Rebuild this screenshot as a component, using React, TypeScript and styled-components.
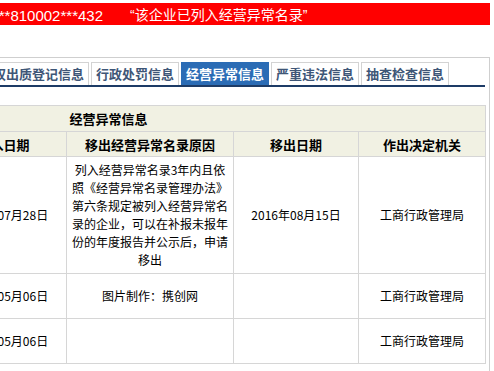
import React from 'react';
import styled, { createGlobalStyle } from 'styled-components';

const GlobalStyle = createGlobalStyle`
  html, body {
    margin: 0;
    padding: 0;
    background: #fff;
    overflow: hidden;
  }
  body {
    font-family: "Noto Sans CJK SC", "Liberation Sans", sans-serif;
    font-size: 12px;
    color: #000;
  }
`;

// the screenshot is a crop of a wider page, so the sheet is shifted left
const Viewport = styled.div`
  width: 494px;
  height: 371px;
  overflow: hidden;
`;

const Sheet = styled.div`
  margin-left: -274px;
  width: 764px;
  padding-top: 3px;
`;

const Alert = styled.div`
  height: 22px;
  background: #ff0000;
  color: #fff;
  display: flex;
  align-items: center;
  white-space: nowrap;
`;

const RegNo = styled.span`
  width: 377px;
  text-align: right;
  font-size: 15px;
  font-family: "Liberation Sans", "Noto Sans CJK SC", sans-serif;
`;

const Warning = styled.span`
  margin-left: 27px;
  font-size: 14px;
  font-family: "Liberation Sans", "Noto Sans CJK SC", sans-serif;
`;

const Panel = styled.div`
  margin-top: 32px;
  width: 764px;
  box-sizing: border-box;
  border: 1px solid #cfcfcf;
  padding: 4px 4px 24px;
`;

const TabBar = styled.div`
  display: flex;
  gap: 2px;
  border-bottom: 2px solid #1d3b66;
`;

const Tab = styled.div<{ $active?: boolean }>`
  height: 22px;
  padding: 0 4px;
  border: 1px solid ${({ $active }) => ($active ? '#2b6cb5' : '#d3d3d3')};
  border-bottom: none;
  background: ${({ $active }) => ($active ? '#2b6cb5' : '#fff')};
  color: ${({ $active }) => ($active ? '#fff' : '#3e5677')};
  font-size: 13px;
  font-weight: bold;
  line-height: 22px;
  white-space: nowrap;
`;

const Table = styled.table`
  margin-top: 18px;
  width: 100%;
  border-collapse: collapse;
  table-layout: fixed;
`;

const Row = styled.tr<{ $h: number }>`
  height: ${({ $h }) => $h}px;
`;

const Head = styled.th`
  background: #f1f1e3;
  border: 1px solid #d6d6d6;
  font-size: 13px;
  font-weight: bold;
  text-align: center;
  padding: 0 4px;
  white-space: nowrap;
`;

const Cell = styled.td`
  border: 1px solid #d6d6d6;
  padding: 4px 5px;
  line-height: 18px;
  text-align: center;
  vertical-align: middle;
  white-space: nowrap;
`;

const tabs = ['登记信息', '备案信息', '动产抵押登记信息', '股权出质登记信息', '行政处罚信息', '经营异常信息', '严重违法信息', '抽查检查信息'];

const colWidths = [41, 168, 126, 167, 125, 127];

const columns = ['序号', '列入经营异常名录原因', '列入日期', '移出经营异常名录原因', '移出日期', '作出决定机关'];

type Entry = {
  reason: React.ReactNode;
  listed: string;
  removeReason: React.ReactNode;
  removed: string;
  authority: string;
  h: number;
};

const entries: Entry[] = [
  {
    reason: <>未依照规定的期限<br />公示年度报告</>,
    listed: '2015年07月28日',
    removeReason: (
      <>
        列入经营异常名录3年内且依<br />
        照《经营异常名录管理办法》<br />
        第六条规定被列入经营异常名<br />
        录的企业，可以在补报未报年<br />
        份的年度报告并公示后，申请<br />
        移出
      </>
    ),
    removed: '2016年08月15日',
    authority: '工商行政管理局',
    h: 116,
  },
  {
    reason: <>未依照规定的期限<br />公示年度报告</>,
    listed: '2016年05月06日',
    removeReason: '图片制作：携创网',
    removed: '',
    authority: '工商行政管理局',
    h: 45,
  },
  {
    reason: <>未依照规定的期限<br />公示年度报告</>,
    listed: '2016年05月06日',
    removeReason: '',
    removed: '',
    authority: '工商行政管理局',
    h: 45,
  },
];

export default function App() {
  return (
    <>
      <GlobalStyle />
      <Viewport>
        <Sheet>
          <Alert>
            <RegNo>注册号：91***810002***432</RegNo>
            <Warning>“该企业已列入经营异常名录”</Warning>
          </Alert>
          <Panel>
            <TabBar>
              {tabs.map((t) => (
                <Tab key={t} $active={t === '经营异常信息'}>
                  {t}
                </Tab>
              ))}
            </TabBar>
            <Table>
              <colgroup>
                {colWidths.map((w, i) => (
                  <col key={i} style={{ width: w }} />
                ))}
              </colgroup>
              <thead>
                <Row $h={26}>
                  <Head colSpan={6}>经营异常信息</Head>
                </Row>
                <Row $h={25}>
                  {columns.map((c) => (
                    <Head key={c}>{c}</Head>
                  ))}
                </Row>
              </thead>
              <tbody>
                {entries.map((e, i) => (
                  <Row key={i} $h={e.h}>
                    <Cell>{i + 1}</Cell>
                    <Cell>{e.reason}</Cell>
                    <Cell>{e.listed}</Cell>
                    <Cell>{e.removeReason}</Cell>
                    <Cell>{e.removed}</Cell>
                    <Cell>{e.authority}</Cell>
                  </Row>
                ))}
              </tbody>
            </Table>
          </Panel>
        </Sheet>
      </Viewport>
    </>
  );
}
